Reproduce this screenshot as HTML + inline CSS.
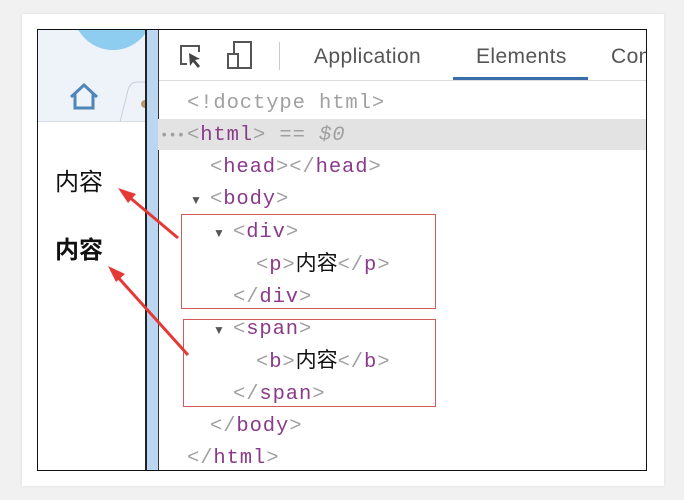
<!DOCTYPE html>
<html><head><style>
body{margin:0;width:684px;height:500px;background:#f1f1f1;position:relative;overflow:hidden;font-family:"Liberation Sans","Noto Sans CJK SC",sans-serif}
.card{position:absolute;left:22px;top:14px;width:642px;height:472px;background:#fff;box-shadow:0 0 3px #ddd}
.frame{position:absolute;left:37px;top:29px;width:608px;height:440px;border:1px solid #111;background:#fff;overflow:hidden}
.lh{position:absolute;left:0;top:0;width:107px;height:91px;background:#eef3f9;border-bottom:1px solid #d8dde4}
.circ{position:absolute;left:35px;top:-60px;width:80px;height:80px;border-radius:50%;background:#8fcdf0}
.div1{position:absolute;left:107px;top:0;width:2px;height:440px;background:#222}
.bar{position:absolute;left:109px;top:0;width:11px;height:440px;background:#bcd6f2}
.div2{position:absolute;left:120px;top:0;width:1px;height:440px;background:#333}
.tb{position:absolute;left:121px;top:0;right:0;height:50px;border-bottom:1px solid #ddd;background:#fff}
.tab{position:absolute;top:15px;font-size:21px;color:#555;letter-spacing:0.4px}
.l{position:absolute;height:32px;line-height:32px;white-space:pre;color:#a0a0a0;font-family:"Liberation Mono","Noto Sans CJK SC",monospace;font-size:20.5px;letter-spacing:0.9px;margin-top:2px}
.t{color:#8a3a8a}
.hl{position:absolute;left:158px;top:119px;width:488px;height:31px;background:#e3e3e3}
.cn{color:#111;letter-spacing:0;font-size:21px}
.tri{position:absolute;font-size:12px;color:#555;line-height:32px;margin-top:2px}
.rb{position:absolute;border:1.5px solid #d45a5a}
</style></head><body>
<div class="card"></div>
<div class="frame">
<div class="lh"><div class="circ"></div>
<svg style="position:absolute;left:30px;top:52px" width="34" height="30"><path d="M3 15 L16 3 L29 15 M7 12 V26 H25 V12" fill="none" stroke="#4f86b8" stroke-width="3"/></svg>
<svg style="position:absolute;left:80px;top:40px" width="30" height="52"><path d="M2 52 L10 20 Q12 12 20 12 H30" fill="none" stroke="#c8cfd8" stroke-width="1"/><circle cx="27" cy="34" r="4" fill="#b59a6a"/></svg>
</div>
<div style="position:absolute;left:17px;top:132px;font-size:24px;color:#111">内容</div>
<div style="position:absolute;left:17px;top:200px;font-size:24px;font-weight:bold;color:#111">内容</div>
<div class="div1"></div><div class="bar"></div><div class="div2"></div>
<div class="tb">
<svg style="position:absolute;left:19px;top:13px" width="28" height="28"><path d="M9 21 H3 V3 H21 V9" fill="none" stroke="#555" stroke-width="2"/><path d="M11 10 L22 16 L17 17 L22 23 L20 25 L15 19 L12 23 Z" fill="#444"/></svg>
<svg style="position:absolute;left:67px;top:10px" width="30" height="32"><rect x="8" y="2" width="17" height="26" fill="none" stroke="#555" stroke-width="2"/><rect x="2" y="14" width="10" height="14" fill="#fff" stroke="#555" stroke-width="2"/></svg>
<div style="position:absolute;left:120px;top:12px;width:1px;height:28px;background:#ccc"></div>
<div class="tab" style="left:155px">Application</div>
<div class="tab" style="left:317px">Elements</div>
<div style="position:absolute;left:294px;top:47px;width:135px;height:3px;background:#3a6ea8"></div>
<div class="tab" style="left:452px">Con</div>
</div>
</div>
<div class="hl"></div>
<div class="l" style="left:187px;top:86px">&lt;!doctype html&gt;</div>
<div class="l" style="left:160px;top:118px;letter-spacing:0;font-size:14px">•••</div>
<div class="l" style="left:187px;top:118px">&lt;<span class="t">html</span>&gt; == <i>$0</i></div>
<div class="l" style="left:210px;top:150px">&lt;<span class="t">head</span>&gt;&lt;/<span class="t">head</span>&gt;</div>
<div class="tri" style="left:190px;top:182px">▼</div>
<div class="l" style="left:210px;top:182px">&lt;<span class="t">body</span>&gt;</div>
<div class="tri" style="left:213px;top:215px">▼</div>
<div class="l" style="left:233px;top:215px">&lt;<span class="t">div</span>&gt;</div>
<div class="l" style="left:256px;top:248px">&lt;<span class="t">p</span>&gt;<span class="cn">内容</span>&lt;/<span class="t">p</span>&gt;</div>
<div class="l" style="left:233px;top:280px">&lt;/<span class="t">div</span>&gt;</div>
<div class="tri" style="left:213px;top:312px">▼</div>
<div class="l" style="left:233px;top:312px">&lt;<span class="t">span</span>&gt;</div>
<div class="l" style="left:256px;top:345px">&lt;<span class="t">b</span>&gt;<span class="cn">内容</span>&lt;/<span class="t">b</span>&gt;</div>
<div class="l" style="left:233px;top:377px">&lt;/<span class="t">span</span>&gt;</div>
<div class="l" style="left:210px;top:409px">&lt;/<span class="t">body</span>&gt;</div>
<div class="l" style="left:187px;top:441px">&lt;/<span class="t">html</span>&gt;</div>
<div class="rb" style="left:181px;top:214px;width:253px;height:93px"></div>
<div class="rb" style="left:183px;top:319px;width:251px;height:86px"></div>
<svg style="position:absolute;left:0;top:0" width="684" height="500">
<line x1="178" y1="238" x2="128" y2="196" stroke="#e53935" stroke-width="3"/>
<path d="M118 188 L136 194 L128 203 Z" fill="#e53935"/>
<line x1="188" y1="355" x2="116" y2="275" stroke="#e53935" stroke-width="3"/>
<path d="M108 266 L125 274 L116 282 Z" fill="#e53935"/>
</svg>
</body></html>
